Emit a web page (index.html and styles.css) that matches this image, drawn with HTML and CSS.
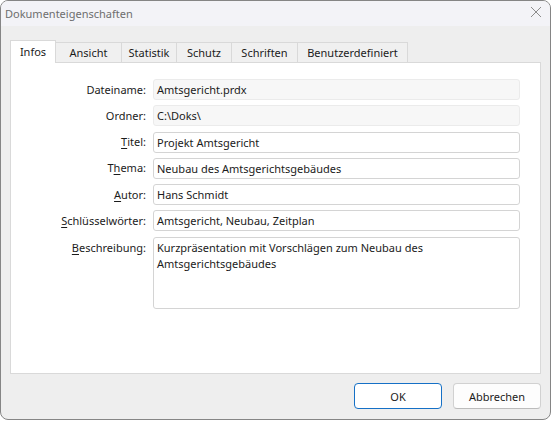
FILE: index.html
```html
<!DOCTYPE html>
<html lang="de">
<head>
<meta charset="utf-8">
<title>Dokumenteigenschaften</title>
<link rel="stylesheet" href="styles.css">
</head>
<body>
<div class="window">
  <div class="titlebar">
    <span class="title">Dokumenteigenschaften</span>
    <svg class="close" width="12" height="12" viewBox="0 0 12 12"><path d="M1 1 L11 11 M11 1 L1 11" stroke="#8c8c8c" stroke-width="1" fill="none"/></svg>
  </div>
  <div class="body">
    <div class="tabs">
      <div class="tab active t-infos">Infos</div>
      <div class="tab t-ansicht">Ansicht</div>
      <div class="tab t-statistik">Statistik</div>
      <div class="tab t-schutz">Schutz</div>
      <div class="tab t-schriften">Schriften</div>
      <div class="tab t-benutzer">Benutzerdefiniert</div>
    </div>
    <div class="panel">
      <div class="form">
        <label class="lbl">Dateiname:</label>
        <div class="field readonly">Amtsgericht.prdx</div>
        <label class="lbl">Ordner:</label>
        <div class="field readonly">C:\Doks\</div>
        <label class="lbl"><u>T</u>itel:</label>
        <div class="field">Projekt Amtsgericht</div>
        <label class="lbl">T<u>h</u>ema:</label>
        <div class="field">Neubau des Amtsgerichtsgebäudes</div>
        <label class="lbl"><u>A</u>utor:</label>
        <div class="field">Hans Schmidt</div>
        <label class="lbl"><u>S</u>chlüsselwörter:</label>
        <div class="field">Amtsgericht, Neubau, Zeitplan</div>
        <label class="lbl top"><u>B</u>eschreibung:</label>
        <div class="field area">Kurzpräsentation mit Vorschlägen zum Neubau des<br>Amtsgerichtsgebäudes</div>
      </div>
    </div>
    <div class="footer">
      <button class="btn default">OK</button>
      <button class="btn">Abbrechen</button>
    </div>
  </div>
</div>
</body>
</html>
```
FILE: styles.css
```css
* { box-sizing: border-box; }
html, body { margin: 0; padding: 0; background: #ffffff; }
body {
  font-family: "Noto Sans", "Open Sans", sans-serif;
  font-size: 11px;
  color: #1b1b1b;
}
.window {
  width: 551px;
  height: 420px;
  border: 1px solid #858585;
  border-radius: 8px;
  overflow: hidden;
  background: #eeeeee;
  display: flex;
  flex-direction: column;
}
.titlebar {
  height: 25px;
  background: #f3f3f7;
  display: flex;
  align-items: center;
  justify-content: space-between;
  padding: 0 8px 0 4px;
}
.title {
  color: #6e6e6e;
  font-size: 11px;
  line-height: 14px;
  margin-top: 0;
}
.close { margin-top: -3px; }
.body {
  flex: 1;
  display: flex;
  flex-direction: column;
  padding: 14px 9px 0 9px;
}
.tabs {
  display: flex;
  align-items: flex-end;
  height: 22px;
  position: relative;
  z-index: 1;
}
.tab {
  height: 20px;
  border: 1px solid #d9d9d9;
  border-bottom: none;
  border-left: none;
  background: #f0f0f0;
  display: flex;
  align-items: center;
  justify-content: center;
  line-height: 14px;
  padding-top: 1px;
}
.tab.active {
  height: 23px;
  margin-bottom: -1px;
  background: #ffffff;
  border-left: 1px solid #d9d9d9;
  padding-bottom: 2px;
}
.t-infos { width: 46px; }
.t-ansicht { width: 66px; }
.t-statistik { width: 55px; }
.t-schutz { width: 55px; }
.t-schriften { width: 66px; }
.t-benutzer { width: 110px; }
.panel {
  width: 531px;
  height: 312px;
  background: #ffffff;
  border: 1px solid #d9d9d9;
  padding-top: 16px;
}
.form {
  display: grid;
  grid-template-columns: 135px 367px;
  column-gap: 7px;
  row-gap: 5.3px;
}
.lbl {
  text-align: right;
  align-self: center;
  line-height: 14px;
}
.lbl.top { align-self: start; padding-top: 4px; }
u { text-decoration-thickness: 1px; text-underline-offset: 2px; }
.field {
  height: 21px;
  border: 1px solid #d4d4d4;
  border-radius: 3px;
  background: #ffffff;
  padding: 0 3px;
  line-height: 19px;
  white-space: nowrap;
}
.field.readonly {
  background: #f7f7f7;
  border-color: #ebebeb;
}
.field.area {
  height: 72px;
  line-height: 16px;
  padding-top: 2px;
}
.footer {
  display: flex;
  justify-content: flex-end;
  gap: 11px;
  padding-top: 9px;
  width: 531px;
}
.btn {
  width: 88px;
  height: 26px;
  font-family: inherit;
  font-size: 11px;
  color: #1b1b1b;
  background: #fdfdfd;
  border: 1px solid #d1d1d1;
  border-bottom-color: #bcbcbc;
  border-radius: 4px;
  padding: 0;
}
.btn.default {
  border: 1px solid #1570c6;
  box-shadow: inset 0 0 0 1px #ffffff;
  background: #ffffff;
}
```
